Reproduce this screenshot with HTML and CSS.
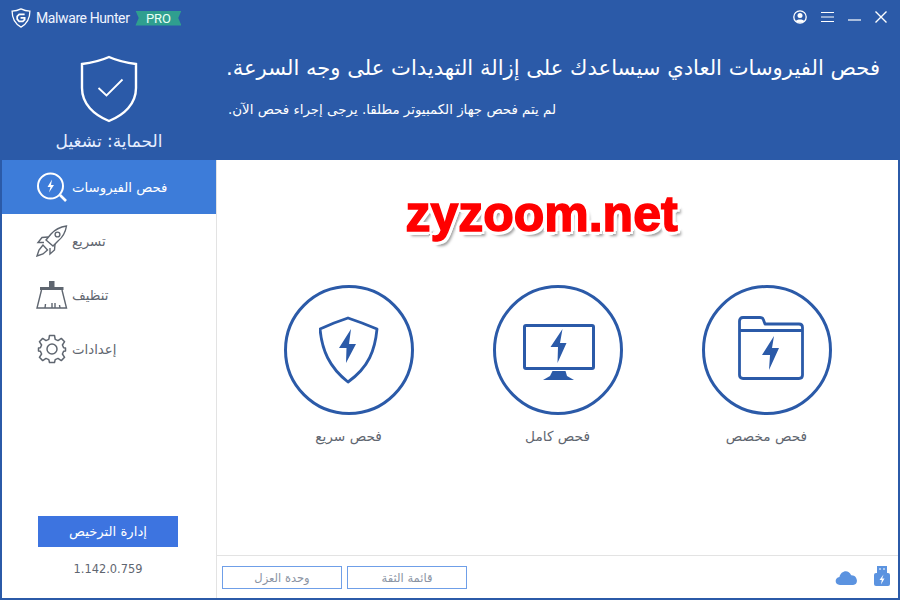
FILE: index.html
```html
<!DOCTYPE html>
<html lang="ar">
<head>
    <meta charset="UTF-8">
    <meta name="viewport" content="width=device-width, initial-scale=1.0">
    <title>Malware Hunter</title>
    <link rel="stylesheet" href="styles.css">
</head>
<body>
<div class="window">

    <!-- Top blue band -->
    <header class="top">
        <div class="titlebar">
            <div class="brand">
                <svg class="brand-logo" width="20" height="20" viewBox="0 0 22 22" fill="none" stroke="#fff">
                    <path d="M11 1 C8 2.6 5 3.4 1.2 3.4 C1.2 11 3 16.8 11 21 C19 16.8 20.8 11 20.8 3.4 C17 3.4 14 2.6 11 1Z" stroke-width="1.4"/>
                    <path d="M15 7 H9 L6.8 9.2 V12.2 L9 14.8 H13 L15 12.8 V10.8 H10.5" stroke-width="1.9"/>
                </svg>
                <span class="brand-name">Malware Hunter</span>
                <span class="pro">PRO</span>
            </div>
            <div class="win-buttons">
                <svg width="14" height="14" viewBox="0 0 14 14">
                    <circle cx="7" cy="7" r="6.2" fill="none" stroke="#fff" stroke-width="1.3"/>
                    <circle cx="7" cy="5.4" r="2.5" fill="#fff"/>
                    <path d="M2.6 11.2 C3.6 8.8 10.4 8.8 11.4 11.2 C9.5 13.4 4.5 13.4 2.6 11.2Z" fill="#fff"/>
                </svg>
                <svg width="13" height="12" viewBox="0 0 13 12" stroke="#fff">
                    <path d="M0 1.5 H13 M0 6 H13 M0 10.5 H13"/>
                </svg>
                <svg width="13" height="12" viewBox="0 0 13 12" stroke="#fff">
                    <path d="M0 9 H13" stroke-width="1.2"/>
                </svg>
                <svg width="12" height="12" viewBox="0 0 12 12" stroke="#fff">
                    <path d="M.5 .5 L11.5 11.5 M11.5 .5 L.5 11.5" stroke-width="1.4"/>
                </svg>
            </div>
        </div>
        <div class="hero">
            <div class="status">
                <svg width="58" height="68" viewBox="0 0 58 68" fill="none" stroke="#fff">
                    <path d="M29 2 C20 6 11 8 2 9 V33 C2 49 14 60 29 66 C44 60 56 49 56 33 V9 C47 8 38 6 29 2Z" stroke-width="2.4"/>
                    <path d="M18.5 33 L26.5 40.5 L42.5 24.5" stroke-width="1.8"/>
                </svg>
                <div class="status-text" dir="rtl">الحماية: تشغيل</div>
            </div>
            <div class="message" dir="rtl">
                <h1>فحص الفيروسات العادي سيساعدك على إزالة التهديدات على وجه السرعة.</h1>
                <p>لم يتم فحص جهاز الكمبيوتر مطلقا. يرجى إجراء فحص الآن.</p>
            </div>
        </div>
    </header>

    <div class="content">
        <!-- Left menu -->
        <aside class="sidebar">
            <nav class="menu">
                <a class="menu-item active" href="#">
                    <svg width="34" height="32" viewBox="0 0 34 32" fill="none" stroke="#fff">
                        <circle cx="14.5" cy="15" r="12.5" stroke-width="2"/>
                        <path d="M24 24 L30 30" stroke-width="2.6"/>
                        <path d="M16 8.5 L11.5 16 H14.5 L13 21.5 L18 14 H15Z" fill="#fff" stroke="none"/>
                    </svg>
                    <span dir="rtl">فحص الفيروسات</span>
                </a>
                <a class="menu-item" href="#">
                    <svg width="34" height="32" viewBox="0 0 34 32" fill="none" stroke="#5f6670" stroke-width="1.4">
                        <path d="M30.5 1 C24 2 19 4.5 15 9 L10 15 L17 21 L22 16 C27 12 29.5 7 30.5 1Z"/>
                        <circle cx="21.5" cy="9.5" r="2.4"/>
                        <path d="M12 12 L6 12.5 L2 17.5 L8 17.5 M19 19 L18.5 25 L14 29 L14 23"/>
                        <path d="M7 20 L3 25 L1 31 L7 29 L11.5 25Z"/>
                    </svg>
                    <span dir="rtl">تسريع</span>
                </a>
                <a class="menu-item" href="#">
                    <svg width="34" height="30" viewBox="0 0 34 30" fill="none" stroke="#5f6670" stroke-width="1.4">
                        <rect x="13" y="1" width="5.5" height="7" fill="#5f6670" stroke="none"/>
                        <rect x="4" y="7" width="23.5" height="3" fill="#5f6670" stroke="none"/>
                        <path d="M5.5 10 L1 28 H30.5 L26 10"/>
                        <path d="M9 28 L9.5 24 M16 28 L16 23 M19 28 L19 23 M24 28 L23.5 25"/>
                    </svg>
                    <span dir="rtl">تنظيف</span>
                </a>
                <a class="menu-item" href="#">
                    <svg width="34" height="30" viewBox="-1 0 34 30" fill="none" stroke="#5f6670" stroke-width="1.5">
                        <circle cx="15" cy="15" r="5"/>
                        <path d="M12.5 1.5 H17.5 L18.2 5.4 L21 6.6 L24.3 4.4 L27.6 7.7 L25.4 11 L26.6 13.8 L28.5 14 V17 L26.6 17.2 L25.4 20 L27.6 23.3 L24.3 26.6 L21 24.4 L18.2 25.6 L17.5 28.5 H12.5 L11.8 25.6 L9 24.4 L5.7 26.6 L2.4 23.3 L4.6 20 L3.4 17.2 L1.5 17 V14 L3.4 13.8 L4.6 11 L2.4 7.7 L5.7 4.4 L9 6.6 L11.8 5.4Z" stroke-linejoin="round"/>
                    </svg>
                    <span dir="rtl">إعدادات</span>
                </a>
            </nav>
            <div class="side-bottom">
                <button class="license" dir="rtl">إدارة الترخيص</button>
                <div class="version">1.142.0.759</div>
            </div>
        </aside>

        <!-- Scan options -->
        <main class="main">
            <div class="scan-area">
                <div class="watermark">zyzoom.net</div>
                <div class="scans">
                    <a class="scan" href="#">
                        <span class="circle">
                            <svg width="60" height="68" viewBox="0 0 60 68" fill="none" stroke="#2b5aa8">
                                <path d="M29 2 L43 7 L58 13 C56 34 50 51 29 66 C10 51 3 34 1 13 L15 7Z" stroke-width="2.8" stroke-linejoin="round"/>
                                <path d="M32 13 L20 32 H27.5 L27 47 L37 28 H30Z" fill="#2b5aa8" stroke="none"/>
                            </svg>
                        </span>
                        <span class="scan-label" dir="rtl">فحص سريع</span>
                    </a>
                    <a class="scan" href="#">
                        <span class="circle">
                            <svg width="75" height="62" viewBox="-3 -4 75 62" fill="none" stroke="#2b5aa8">
                                <rect x="1.5" y="2.5" width="69" height="43" rx="1.5" stroke-width="3"/>
                                <path d="M29.5 48 H42.5 L44 53 L51 57 H20 L27 53Z" fill="#2b5aa8" stroke="none"/>
                                <path d="M39.5 6 L27.5 24 H35 L34.5 40 L43.5 20 H37Z" fill="#2b5aa8" stroke="none"/>
                            </svg>
                        </span>
                        <span class="scan-label" dir="rtl">فحص كامل</span>
                    </a>
                    <a class="scan" href="#">
                        <span class="circle">
                            <svg width="74" height="68" viewBox="-8 0 74 68" fill="none" stroke="#2b5aa8" stroke-width="2.8">
                                <path d="M1.5 14 V5 Q1.5 1.5 5 1.5 H22 Q25 1.5 25.5 4 L27 8 H61 Q64.5 8 64.5 11.5 V59 Q64.5 62.5 61 62.5 H5 Q1.5 62.5 1.5 59Z" stroke-linejoin="round"/>
                                <path d="M1.5 14.5 H64.5"/>
                                <path d="M36 20 L24 39 H32 L31 54 L41 32 H34Z" fill="#2b5aa8" stroke="none"/>
                            </svg>
                        </span>
                        <span class="scan-label" dir="rtl">فحص مخصص</span>
                    </a>
                </div>
            </div>
            <footer class="bottom">
                <button class="outline-btn" dir="rtl">وحدة العزل</button>
                <button class="outline-btn wide" dir="rtl">قائمة الثقة</button>
                <div class="bottom-icons">
                    <svg class="cloud" width="23" height="15" viewBox="0 0 24 16">
                        <path d="M5 16 C-1 16 -1 8 4.5 7.5 C5.5 1 14 -1.5 17 5.5 C24 5 25.5 16 19 16Z" fill="#5b93e0"/>
                    </svg>
                    <svg width="16" height="20" viewBox="0 0 16 20">
                        <rect x="3" y="0" width="10" height="7" fill="#5b93e0"/>
                        <path d="M5 3 H7 M9 3 H11" stroke="#fff"/>
                        <rect x="0" y="7" width="16" height="13" rx="2" fill="#5b93e0"/>
                        <path d="M9.5 8.5 L5.5 14 H7.8 L7 18.5 L10.5 12.5 H8.2Z" fill="#fff"/>
                    </svg>
                </div>
            </footer>
        </main>
    </div>
</div>
</body>
</html>
```

FILE: styles.css
```css
* {
    box-sizing: border-box;
}

body {
    margin: 0;
    font-family: "DejaVu Sans", sans-serif;
}

a {
    text-decoration: none;
}

.window {
    width: 900px;
    height: 600px;
    display: flex;
    flex-direction: column;
    border: solid #2b5aa8;
    border-width: 0 2px 2px;
    background-color: #ffffff;
}

.top {
    height: 160px;
    flex-shrink: 0;
    margin: 0 -2px;
    background-color: #2b5aa8;
    color: #ffffff;
}

.titlebar {
    height: 36px;
    padding: 7px 13px 0 11px;
    display: flex;
    justify-content: space-between;
    align-items: flex-start;
}

.brand {
    display: flex;
    align-items: center;
    height: 22px;
}

.brand-name {
    margin-left: 5px;
    font-family: "Roboto", sans-serif;
    font-size: 14px;
    letter-spacing: -0.4px;
    color: #f0f5ff;
}

.pro {
    width: 46px;
    height: 15px;
    margin-left: 6px;
    background-color: #2f9f8f;
    color: #e8fff6;
    font-family: "Roboto", sans-serif;
    font-size: 13px;
    line-height: 15px;
    text-align: center;
    clip-path: polygon(0 0, 100% 0, 93% 50%, 100% 100%, 0 100%, 7% 50%);
}

.win-buttons {
    display: flex;
    align-items: center;
    gap: 14px;
    height: 20px;
}

.hero {
    display: flex;
}

.status {
    width: 218px;
    flex-shrink: 0;
    padding-top: 19px;
    text-align: center;
}

.status svg {
    display: block;
    margin: 0 auto;
}

.status-text {
    margin-top: 8px;
    font-size: 17px;
    color: #e6eeff;
}

.message {
    width: 662px;
    padding: 17px 0 0 10px;
}

.message h1 {
    margin: 0;
    font-size: 21.1px;
    font-weight: normal;
    line-height: 30px;
    white-space: nowrap;
}

.message p {
    margin: 17px 0 0;
    font-size: 13.4px;
    line-height: 20px;
    text-align: left;
}

.content {
    flex: 1;
    display: flex;
    min-height: 0;
}

.sidebar {
    width: 215px;
    flex-shrink: 0;
    display: flex;
    flex-direction: column;
    justify-content: space-between;
    border-right: 1px solid #e3e3e3;
}

.menu-item {
    height: 54px;
    padding-left: 34px;
    display: flex;
    align-items: center;
    gap: 2px;
    color: #5f6670;
    font-size: 13.3px;
}

.menu-item svg {
    flex-shrink: 0;
}

.menu-item.active {
    background-color: #3d7cd9;
    color: #ffffff;
}

.side-bottom {
    padding: 0 2px 19px 0;
    text-align: center;
}

.license {
    display: block;
    width: 140px;
    height: 31px;
    margin: 0 auto 12px;
    border: none;
    background-color: #3d74e0;
    color: #ffffff;
    font-family: inherit;
    font-size: 13.2px;
}

.version {
    font-size: 11.4px;
    line-height: 20px;
    color: #5f6670;
}

.main {
    flex: 1;
    display: flex;
    flex-direction: column;
    min-width: 0;
}

.scan-area {
    flex: 1;
    padding-top: 29px;
}

.watermark {
    height: 66px;
    margin-right: 32px;
    font-family: "Liberation Sans", sans-serif;
    font-size: 50px;
    font-weight: bold;
    line-height: 50px;
    text-align: center;
    color: #ff0000;
    -webkit-text-stroke: 1.5px #ff0000;
    text-shadow: 4px 0 0 #fff, -4px 0 0 #fff, 0 4px 0 #fff, 0 -4px 0 #fff,
        3px 3px 0 #fff, -3px 3px 0 #fff, 3px -3px 0 #fff, -3px -3px 0 #fff,
        4px 5px 3px rgba(0, 0, 0, 0.4);
}

.scans {
    margin-top: 30px;
    display: flex;
    justify-content: center;
    gap: 79px;
}

.scan {
    display: flex;
    flex-direction: column;
    align-items: center;
    color: #5f6670;
}

.circle {
    width: 130px;
    height: 130px;
    display: flex;
    align-items: center;
    justify-content: center;
    border: 3px solid #2b5aa8;
    border-radius: 50%;
}

.scan-label {
    margin-top: 11px;
    font-size: 13.7px;
    line-height: 20px;
}

.bottom {
    height: 43px;
    flex-shrink: 0;
    padding: 10px 8px 0 5px;
    display: flex;
    align-items: flex-start;
    gap: 5px;
    border-top: 1px solid #e3e3e3;
}

.outline-btn {
    width: 120px;
    height: 23px;
    padding: 0;
    border: 1px solid #6f9fe8;
    background-color: #ffffff;
    color: #8a93a3;
    font-family: inherit;
    font-size: 11.5px;
}

.bottom-icons {
    margin-left: auto;
    display: flex;
    align-items: flex-end;
    gap: 16px;
    height: 20px;
}

.bottom-icons .cloud {
    margin-bottom: 1px;
}
```
